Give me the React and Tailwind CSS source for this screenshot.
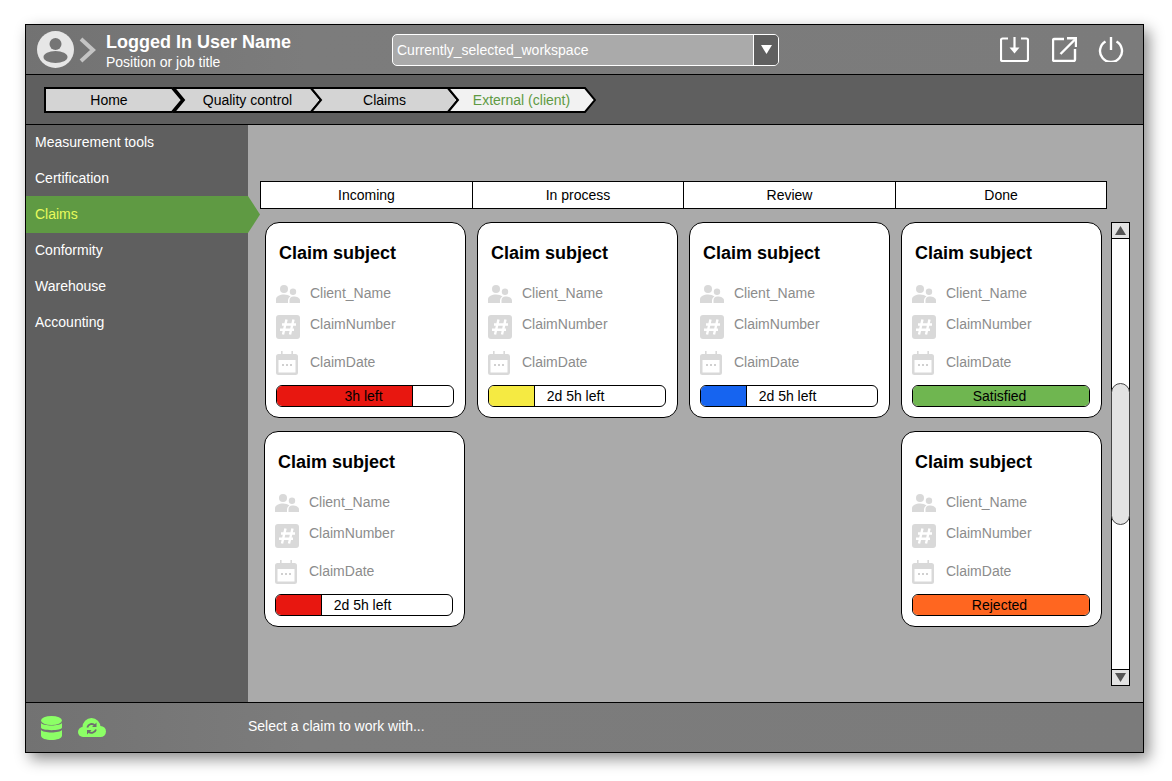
const navItems = ["Measurement tools", "Certification", "Claims", "Conformity", "Warehouse", "Accounting"];
const columns = ["Incoming", "In process", "Review", "Done"];
const crumbs = ["Home", "Quality control", "Claims", "External (client)"];

function Avatar() {
  return (
    <svg width="37" height="37" viewBox="0 0 37 37">
      <circle cx="18.5" cy="18.5" r="18.5" fill="#e6e6e6" />
      <circle cx="18.5" cy="13" r="6" fill="#757575" />
      <ellipse cx="18.5" cy="26" rx="12" ry="6" fill="#757575" />
    </svg>
  );
}

function Crumb({ label, index }) {
  const last = index === crumbs.length - 1;
  return (
    <div className={index === 0 ? "relative w-[139px] h-[26px] pr-[9px] flex items-center justify-center" : "relative w-[147px] h-[26px] -ml-[10px] pl-[2px] flex items-center justify-center"}>
      <svg className="absolute inset-0" width={index === 0 ? 141 : 149} height="26" viewBox={index === 0 ? "0 0 141 26" : "-8 0 149 26"}>
        <polygon
          points={index === 0 ? "1,1 1,25 128,25 138,13 128,1" : "-7,1 3,13 -7,25 130,25 140,13 130,1"}
          fill={last ? "#f2f2f2" : "#d4d4d4"}
          stroke="#000"
          strokeWidth="2"
        />
      </svg>
      <span className={last ? "relative text-sm text-[#5f9a43]" : "relative text-sm text-black"}>{label}</span>
    </div>
  );
}

function PeopleIcon() {
  return (
    <svg width="24" height="18" viewBox="0 0 24 18" fill="#d9d9d9">
      <circle cx="8" cy="4" r="4" />
      <path d="M0 18V14.500C0 11 4 9.500 8 9.500C10.500 9.500 13 10.200 14.500 11.500C12.800 12.500 12 14 12 15.500V18z" />
      <circle cx="17" cy="6.700" r="3.200" />
      <path d="M13.500 18V15.500C13.500 13 15 11.500 17.500 11.500C21 11.500 24 13 24 15.500V18z" />
    </svg>
  );
}

function HashTile() {
  return (
    <svg width="24" height="24" viewBox="0 0 24 24">
      <rect width="24" height="24" rx="3" fill="#d9d9d9" />
      <path d="M10.500 4.500 7 19.500M17.500 4.500 14 19.500M6 9.500h14M4 14.800h14" stroke="#fff" strokeWidth="2.400" fill="none" />
    </svg>
  );
}

function CalendarTile() {
  return (
    <svg width="22" height="24" viewBox="0 0 22 24">
      <path d="M5 0h1.600v3H15.400V0H17v3h2.500A2.500 2.500 0 0 1 22 5.500V21.500A2.500 2.500 0 0 1 19.500 24H2.500A2.500 2.500 0 0 1 0 21.500V5.500A2.500 2.500 0 0 1 2.500 3H5z" fill="#d9d9d9" />
      <rect x="2.500" y="9" width="17" height="12.500" fill="#fff" />
      <rect x="6" y="13" width="2" height="2" fill="#d0d0d0" />
      <rect x="10" y="13" width="2" height="2" fill="#d0d0d0" />
      <rect x="14" y="13" width="2" height="2" fill="#d0d0d0" />
    </svg>
  );
}

function Card({ status, barColor, barWidth, className }) {
  const full = barWidth === "100%";
  return (
    <div className={`w-[201px] h-[196px] bg-white border border-black rounded-[14px] pl-[10px] pr-[11px] flex flex-col ${className || ""}`}>
      <div className="mt-[19px] ml-[3px] h-[22px] leading-[22px] text-[18px] font-bold text-black">Claim subject</div>
      <div className="mt-[18px] h-[24px] flex items-center">
        <PeopleIcon />
        <span className="ml-[10px] mb-[2px] text-sm text-[#8c8c8c]">Client_Name</span>
      </div>
      <div className="mt-[9px] h-[24px] flex">
        <HashTile />
        <span className="ml-[10px] text-sm text-[#8c8c8c] leading-[18px]">ClaimNumber</span>
      </div>
      <div className="mt-[12px] h-[24px] flex items-center">
        <CalendarTile />
        <span className="ml-[12px] mb-[2px] text-sm text-[#8c8c8c]">ClaimDate</span>
      </div>
      <div className="relative mt-[10px] h-[22px] pr-[3px] border border-black rounded-[6px] overflow-hidden bg-white flex items-center justify-center">
        <div className={full ? "absolute left-0 top-0 bottom-0" : "absolute left-0 top-0 bottom-0 border-r border-black"} style={{ width: barWidth, backgroundColor: barColor }} />
        <span className="relative text-sm leading-none text-black">{status}</span>
      </div>
    </div>
  );
}

export default function App() {
  return (
    <div className="min-h-screen bg-white pt-[24px] pl-[25px] font-['Liberation_Sans',Arial,sans-serif]">
      <div className="w-[1119px] h-[729px] border border-black flex flex-col shadow-[5px_6px_14px_rgba(0,0,0,0.45)]">
        {/* top bar */}
        <div className="h-[50px] shrink-0 border-b border-black bg-[linear-gradient(90deg,#727272,#7c7c7c_25%,#7b7b7b)] flex items-center">
          <div className="w-[366px] flex items-center pl-[11px]">
            <Avatar />
            <svg className="ml-[5px]" width="17" height="26" viewBox="0 0 17 26">
              <path d="M2 2l12 11L2 24" fill="none" stroke="#c4c4c4" strokeWidth="4" />
            </svg>
            <div className="ml-[10px] pt-[4px] text-white">
              <div className="text-[18px] leading-[20px] font-bold">Logged In User Name</div>
              <div className="mt-[2px] text-sm leading-[17px]">Position or job title</div>
            </div>
          </div>
          <div className="w-[387px] h-[32px] border border-white rounded-[5px] bg-[#aaaaaa] overflow-hidden flex">
            <div className="flex-1 pl-[4px] text-sm leading-[30px] text-white">Currently_selected_workspace</div>
            <div className="w-[25px] border-l border-white bg-[#5f5f5f] flex items-center justify-center">
              <svg width="11" height="9" viewBox="0 0 11 9"><path d="M0 0h11L5.500 9z" fill="#fff" /></svg>
            </div>
          </div>
          <div className="ml-auto pr-[19px] flex items-center">
            <svg width="29" height="25" viewBox="0 0 29 25" fill="none" stroke="#fff" strokeWidth="2.200">
              <path d="M8 1.500H2.500A1.500 1.500 0 0 0 1 3V22.500A1.500 1.500 0 0 0 2.500 24H26.500A1.500 1.500 0 0 0 28 22.500V3A1.500 1.500 0 0 0 26.500 1.500H21" />
              <path d="M14.500 0V13" />
              <path d="M9.500 10.500h10L14.500 16.500z" fill="#fff" stroke="none" />
            </svg>
            <svg className="ml-[23px]" width="25" height="25" viewBox="0 0 25 25" fill="none" stroke="#fff" strokeWidth="2.400">
              <path d="M12 2H2.500A1.500 1.500 0 0 0 1 3.500V22.500A1.500 1.500 0 0 0 2.500 24H21.500A1.500 1.500 0 0 0 23 22.500V12" />
              <path d="M8.500 17 23 2.500" />
              <path d="M15 1.300H24V10" />
            </svg>
            <svg className="ml-[21px]" width="26" height="25" viewBox="0 0 26 25" fill="none" stroke="#fff" strokeWidth="2.400">
              <path d="M13 0V13" />
              <path d="M7.500 4.500A11 11 0 1 0 18.500 4.500" />
            </svg>
          </div>
        </div>

        {/* breadcrumb */}
        <div className="h-[50px] shrink-0 border-b border-black bg-[#5f5f5f] flex items-center pl-[18px]">
          {crumbs.map((c, i) => (
            <Crumb key={c} label={c} index={i} />
          ))}
        </div>

        <div className="flex-1 flex min-h-0">
          {/* sidebar */}
          <div className="w-[222px] shrink-0 bg-[#5f5f5f] relative z-10">
            <div className="-mt-px">
              {navItems.map((item) =>
                item === "Claims" ? (
                  <div
                    key={item}
                    className="w-[234px] h-[37px] -mb-px pl-[9px] pb-[2px] flex items-center text-sm text-[#e8fb5c] bg-[#5f9a43] [clip-path:polygon(0_0,222px_0,234px_50%,222px_100%,0_100%)]"
                  >
                    {item}
                  </div>
                ) : (
                  <div key={item} className="h-9 pl-[9px] flex items-center text-sm text-white">
                    {item}
                  </div>
                )
              )}
            </div>
          </div>

          {/* board */}
          <div className="flex-1 bg-[#aaaaaa] pt-[56px] pl-[12px]">
            <div className="w-[847px] h-[28px] border border-black bg-white grid grid-cols-[212px_211px_212px_210px] text-sm text-black">
              {columns.map((c, i) => (
                <div key={c} className={i < 3 ? "border-r border-black flex items-center justify-center" : "flex items-center justify-center"}>
                  {c}
                </div>
              ))}
            </div>
            <div className="mt-[13px] flex">
              <div className="pl-[5px] w-[851px] grid grid-cols-[201px_201px_201px_201px] gap-x-[11px] gap-y-[13px] auto-rows-[196px]">
                <Card status="3h left" barColor="#e81710" barWidth="136px" />
                <Card status="2d 5h left" barColor="#f5ea42" barWidth="46px" />
                <Card status="2d 5h left" barColor="#1664f0" barWidth="46px" />
                <Card status="Satisfied" barColor="#6fb650" barWidth="100%" />
                <Card status="2d 5h left" barColor="#e81710" barWidth="46px" className="-ml-px" />
                <div />
                <div />
                <Card status="Rejected" barColor="#ff6620" barWidth="100%" />
              </div>
              {/* scrollbar */}
              <div className="w-[19px] h-[464px] border border-black bg-white flex flex-col">
                <div className="h-[16px] border-b border-black bg-[#e3e3e3] flex items-center justify-center">
                  <svg width="11" height="9" viewBox="0 0 11 9"><path d="M0 9h11L5.500 0z" fill="#555" /></svg>
                </div>
                <div className="mt-[144px] h-[142px] -mx-px border border-[#444] rounded-[10px] bg-[#e3e3e3]" />
                <div className="mt-auto h-[16px] border-t border-black bg-[#e3e3e3] flex items-center justify-center">
                  <svg width="11" height="9" viewBox="0 0 11 9"><path d="M0 0h11L5.500 9z" fill="#555" /></svg>
                </div>
              </div>
            </div>
          </div>
        </div>

        {/* footer */}
        <div className="h-[50px] shrink-0 border-t border-black bg-[linear-gradient(90deg,#727272,#7c7c7c_25%,#7b7b7b)] flex items-center">
          <div className="w-[222px] flex items-center pl-[15px]">
            <svg width="21" height="24" viewBox="0 0 21 24" fill="#8cff66">
              <ellipse cx="10.500" cy="4.500" rx="10.500" ry="4.500" />
              <path d="M0 7C2 10.300 19 10.300 21 7V11.500C21 15 0 15 0 11.500z" />
              <path d="M0 14C2 17.300 19 17.300 21 14V19.500C21 25.500 0 25.500 0 19.500z" />
            </svg>
            <svg className="ml-[16px]" width="28" height="19" viewBox="0 0 28 19">
              <circle cx="13.500" cy="9" r="9" fill="#8cff66" />
              <circle cx="5" cy="14" r="5" fill="#8cff66" />
              <circle cx="22.500" cy="13.500" r="5.500" fill="#8cff66" />
              <rect x="5" y="11" width="18" height="8" fill="#8cff66" />
              <path d="M9.300 9.500A4.500 4.500 0 0 1 17 7.500M18 11.500A4.500 4.500 0 0 1 10.500 13.500" fill="none" stroke="#6f6f6f" strokeWidth="1.800" />
              <path d="M18.500 4.500v4.500H14zM9 16.500v-4.500H13.500z" fill="#6f6f6f" />
            </svg>
          </div>
          <div className="pb-[4px] text-sm text-white">Select a claim to work with...</div>
        </div>
      </div>
    </div>
  );
}
